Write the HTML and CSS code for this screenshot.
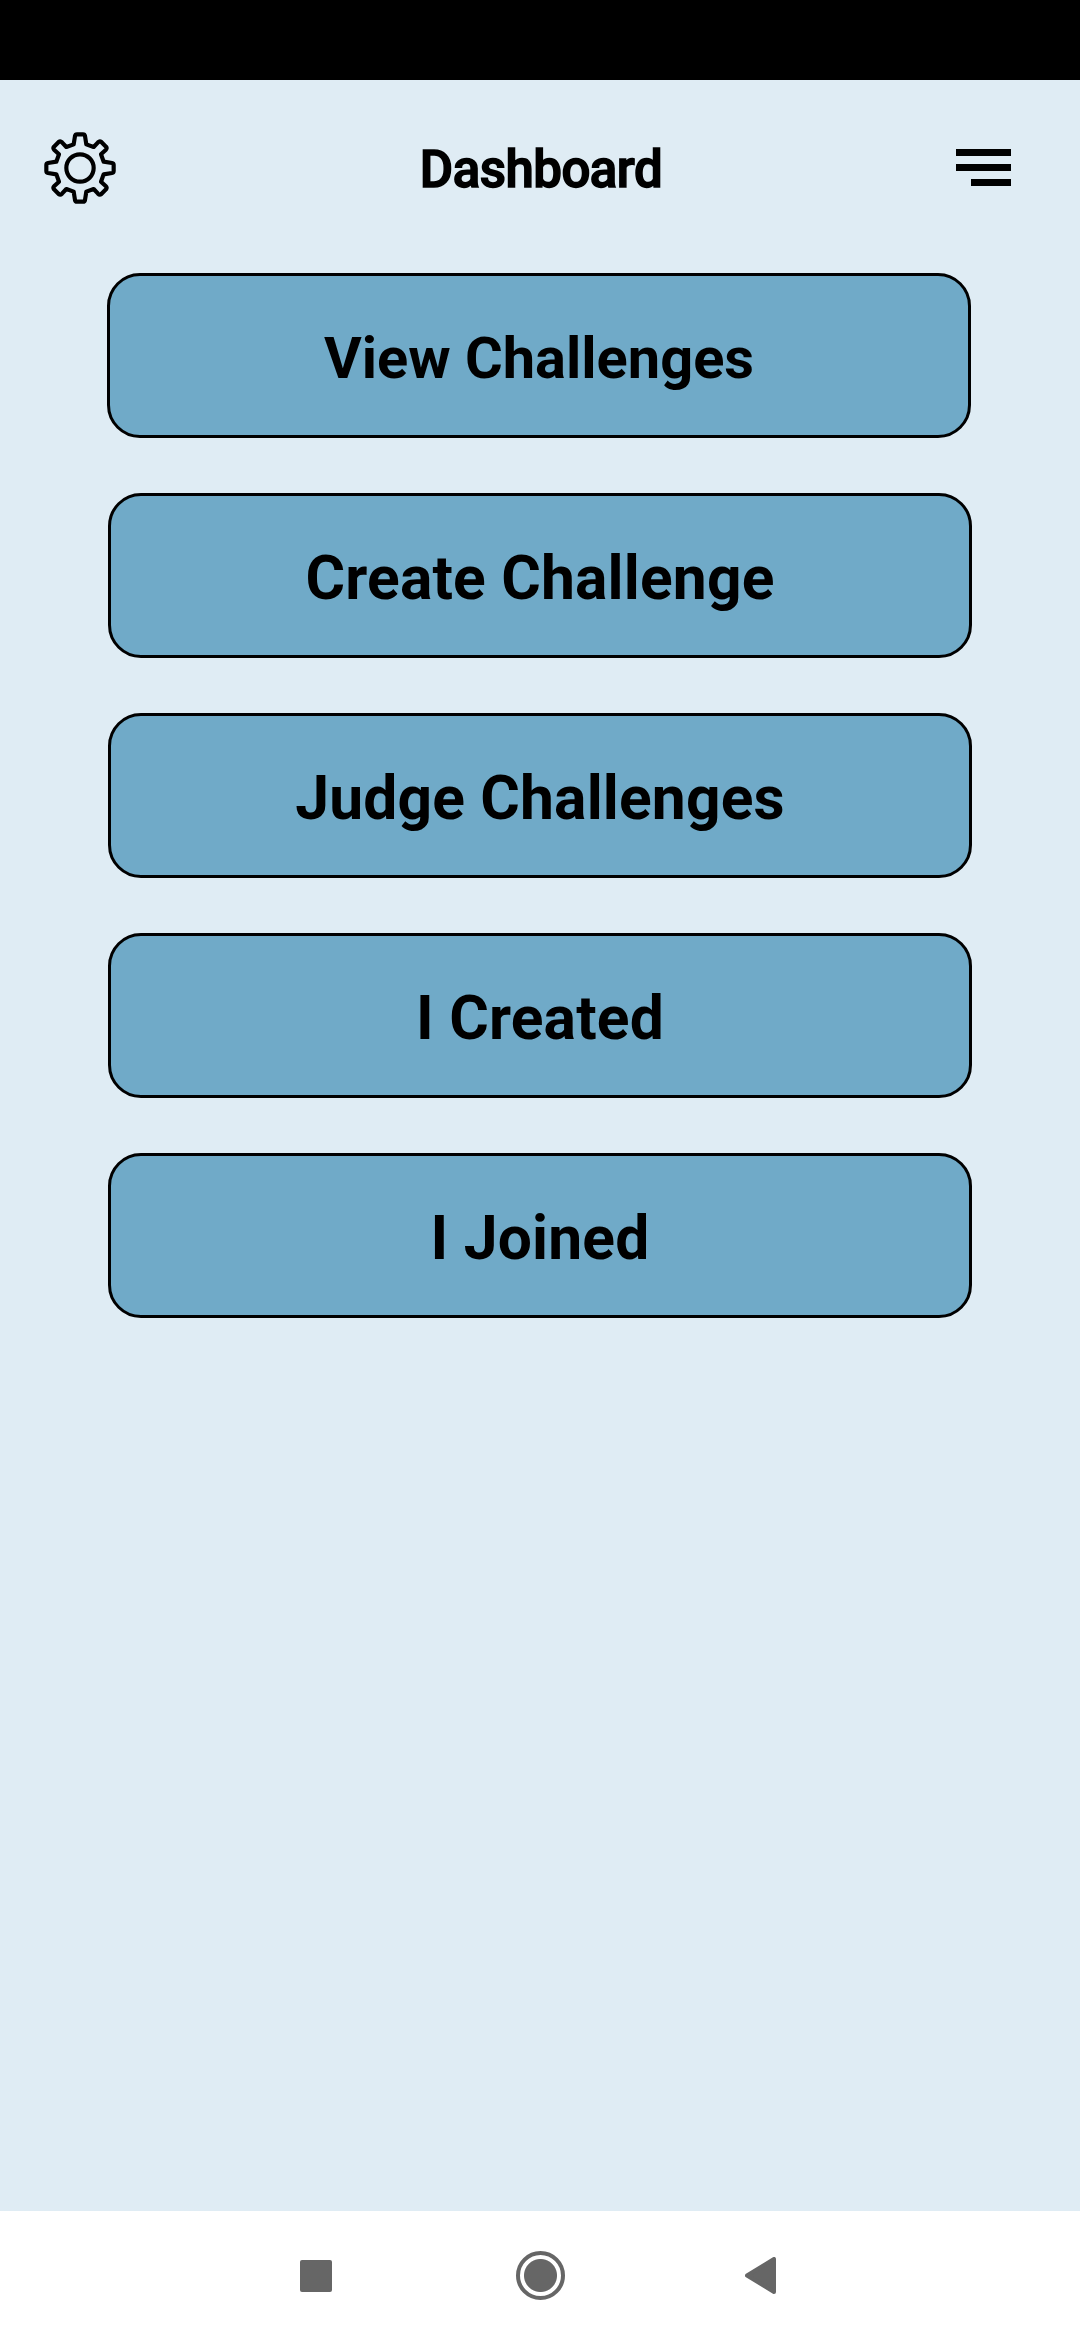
FILE: index.html
```html
<!DOCTYPE html>
<html lang="en">
<head>
    <meta charset="UTF-8">
    <meta name="viewport" content="width=device-width, initial-scale=1.0">
    <title>Dashboard</title>
    <link rel="stylesheet" href="styles.css">
</head>
<body>
    <div class="status-bar"></div>
    <header>
        <svg class="settings-icon" viewBox="-108 -108 216 216">
            <path d="M-19 -71 L-15 -96 Q-14 -101 -9 -101 L9 -101 Q14 -101 15 -96 L19 -71 L41 -63 L54 -77 Q59 -82 64 -78 L78 -64 Q82 -59 77 -54 L63 -41 L71 -19 L96 -15 Q101 -14 101 -9 L101 9 Q101 14 96 15 L71 19 L63 41 L77 54 Q82 59 78 64 L64 78 Q59 82 54 77 L41 63 L19 71 L15 96 Q14 101 9 101 L-9 101 Q-14 101 -15 96 L-19 71 L-41 63 L-54 77 Q-59 82 -64 78 L-78 64 Q-82 59 -77 54 L-63 41 L-71 19 L-96 15 Q-101 14 -101 9 L-101 -9 Q-101 -14 -96 -15 L-71 -19 L-63 -41 L-77 -54 Q-82 -59 -78 -64 L-64 -78 Q-59 -82 -54 -77 L-41 -63 Z"/>
            <circle cx="0" cy="0" r="41"/>
        </svg>
        <h1>Dashboard</h1>
        <div class="menu-icon">
            <span></span>
            <span></span>
            <span class="short"></span>
        </div>
    </header>
    <main class="button-list">
        <button class="dash-button first">View Challenges</button>
        <button class="dash-button">Create Challenge</button>
        <button class="dash-button">Judge Challenges</button>
        <button class="dash-button">I Created</button>
        <button class="dash-button">I Joined</button>
    </main>
    <footer class="nav-bar">
        <div class="nav-recent"></div>
        <div class="nav-home"></div>
        <svg class="nav-back" viewBox="0 0 31 37">
            <path d="M2 18.5 L29 2 L29 35 Z"/>
        </svg>
    </footer>
</body>
</html>
```
FILE: styles.css
```css
* {
    box-sizing: border-box;
}
body {
    font-family: Roboto, Arial, sans-serif;
    margin: 0;
    height: 2340px;
    display: flex;
    flex-direction: column;
    background-color: #dfecf4;
    color: #000;
}
.status-bar {
    height: 80px;
    background-color: #000;
}
header {
    height: 175px;
    padding: 0 69px 0 44px;
    display: grid;
    grid-template-columns: 72px 1fr 55px;
    align-items: center;
}
.settings-icon {
    width: 72px;
    height: 72px;
    fill: none;
    stroke: #000;
    stroke-width: 12.5;
    stroke-linejoin: round;
}
header h1 {
    margin: 3px 0 0 10px;
    font-size: 51px;
    font-weight: 500;
    -webkit-text-stroke: 1.5px #000; /* heavier than medium, narrower than bold */
    letter-spacing: -0.5px;
    text-align: center;
}
.menu-icon {
    display: flex;
    flex-direction: column;
    align-items: flex-end;
    gap: 8px;
}
.menu-icon span {
    width: 55px;
    height: 7px;
    background-color: #000;
}
.menu-icon .short {
    width: 40px;
}
.button-list {
    flex: 1;
    padding: 18px 108px 0;
    display: flex;
    flex-direction: column;
    gap: 55px;
}
.dash-button {
    height: 165px;
    padding: 6px 0 0;
    border: 3px solid #000;
    border-radius: 33px;
    background-color: #70aac8;
    color: #000;
    font-family: inherit;
    font-size: 60.5px;
    font-weight: bold;
    letter-spacing: 0.18px;
    text-align: center;
}
.dash-button.first {
    margin: 0 1px 0 -1px;
    padding-top: 4px;
    font-size: 57.75px;
    letter-spacing: 0;
}
.nav-bar {
    height: 129px;
    padding: 0 304px 0 300px;
    display: flex;
    align-items: center;
    background-color: #fff;
}
.nav-recent {
    width: 32px;
    height: 32px;
    border-radius: 2px;
    background-color: #666;
}
.nav-home {
    width: 49px;
    height: 49px;
    margin: 0 180px 0 184px;
    border: 4px solid #666;
    border-radius: 50%;
    background: radial-gradient(circle, #666 16px, transparent 17px);
}
.nav-back {
    width: 31px;
    height: 37px;
    fill: #666;
    stroke: #666;
    stroke-width: 4;
    stroke-linejoin: round;
}
```
